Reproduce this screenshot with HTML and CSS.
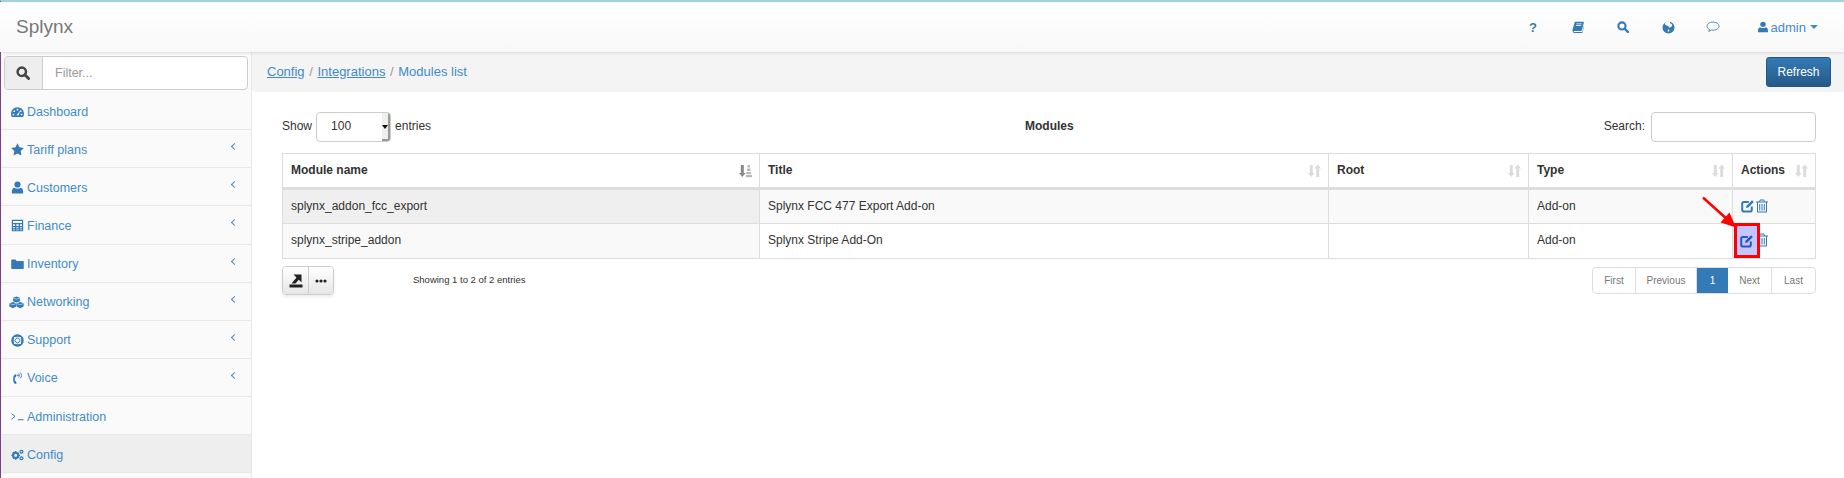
FILE: index.html
```html
<!DOCTYPE html>
<html lang="en">
<head>
  <meta charset="UTF-8">
  <title>Splynx</title>
  <link rel="stylesheet" href="styles.css">
</head>
<body>
  <svg class="defs" width="0" height="0">
    <symbol id="i-search" viewBox="0 0 16 16"><circle cx="6.600" cy="6.600" r="4.800" fill="none" stroke="currentColor" stroke-width="2.800"/><path d="M10 10l4.400 4.400" stroke="currentColor" stroke-width="3.200" stroke-linecap="round"/></symbol>
    <symbol id="i-dash" viewBox="0 0 16 14"><path fill-rule="evenodd" d="M8 1a8 8 0 0 1 8 8c0 1.600-.4 3-1.100 4H1.100C.4 12 0 10.600 0 9a8 8 0 0 1 8-8zM7 3v2h2V3zM3 5v2h2V5zM11 5v2h2V5zM2 9v2h2V9zM12 9v2h2V9zM6.500 11h3l1.500-5.500-2.700 3.700z"/></symbol>
    <symbol id="i-star" viewBox="0 0 16 16"><path d="M8 .3l2.400 5 5.500.8-4 3.800 1 5.500L8 12.800l-4.900 2.600 1-5.500-4-3.800 5.500-.8z"/></symbol>
    <symbol id="i-user" viewBox="0 0 14 16"><circle cx="7" cy="4.300" r="3.800"/><path d="M1 15.500c-.9 0-1-.8-1-1.500 0-3 .8-5.500 3-5.800 1 .8 2.400 1.300 4 1.300s3-.5 4-1.300c2.200.3 3 2.800 3 5.800 0 .7-.1 1.500-1 1.500z"/></symbol>
    <symbol id="i-calc" viewBox="0 0 16 16"><path fill-rule="evenodd" d="M1 1h14v14H1zM2.500 2.500v2.500h11V2.500zM2.500 6.500V8.500h2.500V6.500zM6.500 6.500V8.500h3V6.500zM11 6.500V8.500h2.500V6.500zM2.500 10V11.500h2.500V10zM6.500 10V11.500h3V10zM11 10V11.500h2.500V10zM2.500 13v.7h2.500V13zM6.500 13v.7h3V13zM11 13v.7h2.500V13z"/></symbol>
    <symbol id="i-folder" viewBox="0 0 16 14"><path d="M1.500 1.500h4L7 3.200h7.500c.6 0 1.200.5 1.200 1.200v7.600c0 .7-.6 1.200-1.200 1.200h-13C.8 13.200.3 12.700.3 12V2.700c0-.7.5-1.200 1.200-1.200z"/></symbol>
    <symbol id="i-cubes" viewBox="0 0 18 16"><path d="M9 .5l4.200 1.500v4.400L9 8 4.800 6.400V2zM4.500 7.300l4.300 1.500V13l-4.300 2L.2 13V8.800zM13.500 7.300l4.300 1.500V13l-4.300 2-4.300-2V8.800z"/><path d="M5 2.500l4 1.500 4-1.500M.5 9.300l4 1.500 4-1.500M9.500 9.300l4 1.500 4-1.500" fill="none" stroke="#fafafa" stroke-width=".7"/></symbol>
    <symbol id="i-ring" viewBox="0 0 16 16"><circle cx="8" cy="8" r="6.200" fill="none" stroke="currentColor" stroke-width="3"/><circle cx="8" cy="8" r="3" fill="none" stroke="currentColor" stroke-width="1.200"/><path d="M3.600 3.600l2.300 2.300M12.400 3.600l-2.300 2.300M3.600 12.400l2.300-2.300M12.400 12.400l-2.300-2.300" stroke="#fafafa" stroke-width="1.200"/></symbol>
    <symbol id="i-voice" viewBox="0 0 12 16"><path d="M3.800 2.800L1.800 3.600C.2 6.500.2 10.700 1.800 13.800l2 1 1.200-1-1.200-2.800H3C2.400 9.500 2.400 8 3 6.500h1.100l.8-3z"/><path d="M7.300 1.800c1.400 1.400 1.400 3.400 0 4.800M9.300 .5c2.200 2.200 2.200 5.300 0 7.500" fill="none" stroke="currentColor" stroke-width="1.100"/><circle cx="6.600" cy="4.200" r="1"/></symbol>
    <symbol id="i-term" viewBox="0 0 16 10"><path d="M.7 1.500L5 4.800.7 8.200M8.500 9h7" fill="none" stroke="currentColor" stroke-width="1.200"/></symbol>
    <symbol id="i-cogs" viewBox="0 0 18 16"><circle cx="6.500" cy="8.500" r="3.600" fill="none" stroke="currentColor" stroke-width="3"/><path d="M5.500 2.500h2v2h-2zM5.500 12.500h2v2h-2zM.5 7.500h2v2h-2zM10.500 7.500h2v2h-2zM2 4.700l1.400-1.400 1.400 1.400-1.400 1.400zM8.400 11l1.400-1.400 1.400 1.400-1.400 1.400zM2 12.300l1.400-1.400 1.400 1.400-1.400 1.400zM8.400 6l1.400-1.400L11.200 6 9.800 7.400z"/><circle cx="14.500" cy="3.500" r="2" fill="none" stroke="currentColor" stroke-width="1.700"/><circle cx="14.500" cy="12.500" r="2" fill="none" stroke="currentColor" stroke-width="1.700"/></symbol>
    <symbol id="i-book" viewBox="0 0 14 14"><path fill-rule="evenodd" d="M4 .8h9.300c.5 0 .7.300.6.800l-2.400 9c-.2.700-.6 1-1.300 1H2.600c-.4 0-.8.300-.6.800.1.300.4.400.8.400h8.600c.4 0 .6-.2.700-.5l2-7.800.5.400-2.300 8.300c-.2.600-.6.900-1.200.9H2.500C1.300 13.100.4 12 .5 10.900L3 1.800C3.200 1.200 3.500.8 4 .8zM5.200 3l-.2.800h6.300l.2-.8zM4.600 5l-.2.800h6.300l.2-.8z"/></symbol>
    <symbol id="i-globe" viewBox="0 0 14 14"><path fill-rule="evenodd" d="M7 .5a6.500 6.500 0 1 1 0 13 6.500 6.500 0 0 1 0-13zM3.200 2.200C2.700 3 3.300 3.700 4 4.300c.7.500 1.600.6 2.400 1 1 .5 1.300 1.500 2 2 .5-.2 1.800-1.300 2.500-2.300.3-.5-.1-1.600-.8-2.100-.6-.4-1.300-.1-1.600-.6-.2-.4.2-1 .1-1.300-1.900-.4-4 0-5.400 1.200zM7 8.800c-.7.800-1 2-.7 3 .8-.2 1.500-1 1.700-1.800.1-.6-.5-1-1-1.200z"/></symbol>
    <symbol id="i-comment" viewBox="0 0 16 14"><path d="M8 1.300c3.900 0 7 2 7 4.700s-3.100 4.700-7 4.700c-.7 0-1.300 0-2-.2-.8.800-1.900 1.400-3 1.600.6-.7 1-1.500 1-2.300C2.300 9.100 1 7.700 1 6c0-2.700 3.100-4.700 7-4.700z" fill="none" stroke="currentColor" stroke-width="1"/></symbol>
    <symbol id="i-edit" viewBox="0 0 14 14"><path d="M10.800 7.500v3.200c0 1-.8 1.800-1.800 1.800H3c-1 0-1.800-.8-1.800-1.800v-6c0-1 .8-1.800 1.800-1.800h4.800" fill="none" stroke="currentColor" stroke-width="2"/><path d="M5.500 6.800L11 1.300l1.800 1.800-5.500 5.500-2.300.5z"/></symbol>
    <symbol id="i-trash" viewBox="0 0 12 14"><path fill-rule="evenodd" d="M4 .5h4L9 2.500h3v1h-1v9c0 .6-.4 1-1 1H2c-.6 0-1-.4-1-1v-9H0v-1h3zM4.400 1.500l-.3 1h3.800l-.3-1zM2 3.500v9h8v-9zM3.200 5h1v6.500h-1zM5.500 5h1v6.500h-1zM7.800 5h1v6.500h-1z"/></symbol>
    <symbol id="i-export" viewBox="0 0 14 14"><path d="M.5 10.500h13V13.500H.5zM4.500 .5h8v8l-2.700-2.700-3.300 3.700H2.500l5-6z"/></symbol>
    <symbol id="i-dots" viewBox="0 0 12 4"><circle cx="2" cy="2" r="1.600"/><circle cx="6" cy="2" r="1.600"/><circle cx="10" cy="2" r="1.600"/></symbol>
    <symbol id="i-sort" viewBox="0 0 13 14"><path d="M1.800 1h3v8h1.800L3.300 13 0 9h1.800zM9.700 .5L13 4.500h-1.800V13h-3V4.500H6.400z"/></symbol>
    <symbol id="i-sortasc" viewBox="0 0 13 14"><path d="M1.800 1h3v8h1.800L3.300 13 0 9h1.800z"/><path d="M8.500 1h2.500v2.500H8.500zM8 4.500h3.500v2.500H8zM7.500 8h4.500v2.300H7.500zM7 11h6v2.300H7z" opacity=".6"/></symbol>
  </svg>

  <div class="app">
    <header class="topbar">
      <div class="brand">Splynx</div>
      <nav class="toplinks">
        <a class="toplink help">?</a>
        <a class="toplink"><svg class="ic" width="12" height="12"><use href="#i-book"/></svg></a>
        <a class="toplink"><svg class="ic" width="12" height="12"><use href="#i-search"/></svg></a>
        <a class="toplink"><svg class="ic" width="13" height="13"><use href="#i-globe"/></svg></a>
        <a class="toplink"><svg class="ic" width="14" height="12"><use href="#i-comment"/></svg></a>
        <a class="toplink user"><svg class="ic" width="10" height="12"><use href="#i-user"/></svg>admin<span class="caret"></span></a>
      </nav>
    </header>

    <div class="main">
      <aside class="sidebar">
        <div class="filter">
          <span class="filter-btn"><svg class="ic" width="14" height="14"><use href="#i-search"/></svg></span>
          <input class="filter-input" placeholder="Filter...">
        </div>
        <ul class="menu">
          <li class="menu-item"><svg class="ic menu-ic" height="12"><use href="#i-dash"/></svg>Dashboard</li>
          <li class="menu-item"><svg class="ic menu-ic" height="13"><use href="#i-star"/></svg>Tariff plans<i class="chev"></i></li>
          <li class="menu-item"><svg class="ic menu-ic" height="13"><use href="#i-user"/></svg>Customers<i class="chev"></i></li>
          <li class="menu-item"><svg class="ic menu-ic" height="13"><use href="#i-calc"/></svg>Finance<i class="chev"></i></li>
          <li class="menu-item"><svg class="ic menu-ic" height="12"><use href="#i-folder"/></svg>Inventory<i class="chev"></i></li>
          <li class="menu-item wide-ic"><svg class="ic menu-ic" height="13"><use href="#i-cubes"/></svg>Networking<i class="chev"></i></li>
          <li class="menu-item"><svg class="ic menu-ic" height="13"><use href="#i-ring"/></svg>Support<i class="chev"></i></li>
          <li class="menu-item"><svg class="ic menu-ic" height="13"><use href="#i-voice"/></svg>Voice<i class="chev"></i></li>
          <li class="menu-item"><svg class="ic menu-ic" height="9"><use href="#i-term"/></svg>Administration</li>
          <li class="menu-item active"><svg class="ic menu-ic" height="12"><use href="#i-cogs"/></svg>Config</li>
        </ul>
      </aside>

      <section class="content">
        <div class="crumbs">
          <div class="crumb-path"><a>Config</a> <span>/</span> <a>Integrations</a> <span>/</span> Modules list</div>
          <button class="btn-refresh">Refresh</button>
        </div>

        <div class="panel">
          <div class="table-top">
            <label class="length">Show
              <span class="length-select">100<i></i></span>
              entries</label>
            <div class="table-title">Modules</div>
            <label class="search">Search: <input class="search-input"></label>
          </div>

          <table class="grid">
            <thead>
              <tr>
                <th class="c-name">Module name<svg class="sort on" width="13" height="14"><use href="#i-sortasc"/></svg></th>
                <th class="c-title">Title<svg class="sort" width="13" height="14"><use href="#i-sort"/></svg></th>
                <th class="c-root">Root<svg class="sort" width="13" height="14"><use href="#i-sort"/></svg></th>
                <th class="c-type">Type<svg class="sort" width="13" height="14"><use href="#i-sort"/></svg></th>
                <th class="c-act">Actions<svg class="sort" width="13" height="14"><use href="#i-sort"/></svg></th>
              </tr>
            </thead>
            <tbody>
              <tr class="odd">
                <td class="sorted">splynx_addon_fcc_export</td>
                <td>Splynx FCC 477 Export Add-on</td>
                <td></td>
                <td>Add-on</td>
                <td class="actions"><svg class="ic" width="14" height="14"><use href="#i-edit"/></svg><svg class="ic" width="12" height="14"><use href="#i-trash"/></svg></td>
              </tr>
              <tr>
                <td class="sorted">splynx_stripe_addon</td>
                <td>Splynx Stripe Add-On</td>
                <td></td>
                <td>Add-on</td>
                <td class="actions marked">
                  <svg class="ic" width="14" height="14"><use href="#i-edit"/></svg><svg class="ic" width="12" height="14"><use href="#i-trash"/></svg>
                  <span class="mark"><svg class="ic" width="14" height="14"><use href="#i-edit"/></svg></span>
                  <svg class="arrow" width="40" height="36" viewBox="0 0 40 36"><path d="M2 1.500L27 24" stroke="#f00" stroke-width="2.500"/><path d="M35 31.500L19.500 26.500 28.500 16.500z" fill="#f00"/></svg>
                </td>
              </tr>
            </tbody>
          </table>

          <div class="table-foot">
            <div class="tools">
              <button class="tool"><svg width="14" height="14"><use href="#i-export"/></svg></button>
              <button class="tool"><svg width="12" height="4"><use href="#i-dots"/></svg></button>
            </div>
            <div class="info">Showing 1 to 2 of 2 entries</div>
            <ul class="pager">
              <li>First</li>
              <li>Previous</li>
              <li class="current">1</li>
              <li>Next</li>
              <li>Last</li>
            </ul>
          </div>
        </div>
      </section>
    </div>
  </div>
</body>
</html>
```

FILE: styles.css
```css
*{
  margin: 0px;
  padding: 0px;
  box-sizing: border-box;
}
html, body{
  height: 100%;
  overflow: hidden;
}
body{
  font-family: "Liberation Sans", Arial, sans-serif;
  font-size: 13px;
  color: #333;
  background-color: #fff;
}
ul{
  list-style: none;
}
a{
  color: #428bca;
}
.defs{
  display: block;
  height: 0;
}
.ic{
  fill: currentColor;
  color: #337ab7;
  flex: none;
}
.app{
  height: 100%;
  display: flex;
  flex-direction: column;
  border-left: 1px solid #7b3f8c;
  border-top: 2px solid #a3d3e8;
}
.topbar{
  height: 50px;
  flex: none;
  margin-left: -1px;
  display: flex;
  align-items: center;
  justify-content: space-between;
  background: linear-gradient(#fff, #f8f8f8);
  box-shadow: 0 1px 3px rgba(0,0,0,.12);
  position: relative;
  z-index: 2;
}
.brand{
  margin-left: 16px;
  font-size: 19px;
  color: #777;
}
.toplinks{
  display: flex;
  align-items: center;
  height: 100%;
  padding-right: 26px;
}
.toplink{
  width: 45px;
  display: flex;
  align-items: center;
  justify-content: center;
}
.toplink.help{
  font-weight: bold;
  font-size: 13px;
  color: #337ab7;
}
.toplink.user{
  width: auto;
  margin-left: 22px;
  gap: 3px;
  font-size: 13px;
  color: #428bca;
}
.caret{
  width: 0;
  height: 0;
  border-left: 4px solid transparent;
  border-right: 4px solid transparent;
  border-top: 4px solid #428bca;
  margin-left: 1px;
}
.main{
  flex: 1;
  display: flex;
  min-height: 0;
}
.sidebar{
  width: 251px;
  flex: none;
  background-color: #fafafa;
  border-right: 1px solid #e7e7e7;
}
.filter{
  display: flex;
  height: 34px;
  margin: 4px 3px 2px 3px;
  border: 1px solid #ccc;
  border-radius: 4px;
  background-color: #fff;
  overflow: hidden;
}
.filter-btn{
  width: 38px;
  display: flex;
  align-items: center;
  justify-content: center;
  background-color: #eee;
  border-right: 1px solid #ccc;
}
.filter-btn .ic{
  color: #444;
  margin-left: -1px;
}
.filter-input{
  flex: 1;
  min-width: 0;
  border: 0;
  padding-left: 12px;
  font: 12.5px "Liberation Sans", Arial, sans-serif;
  background: transparent;
}
.filter-input::placeholder{
  color: #999;
}
.menu-item{
  height: 38.125px;
  display: flex;
  align-items: center;
  padding: 2px 0 0 10px;
  border-bottom: 1px solid #e7e7e7;
  color: #428bca;
  font-size: 12.5px;
  position: relative;
}
.menu-ic{
  margin-right: 3px;
  width: 13px;
}
.wide-ic .menu-ic{
  width: 15px;
  margin-left: -2px;
}
.menu-item.active{
  background-color: #eee;
}
.chev{
  position: absolute;
  right: 14px;
  top: 14px;
  width: 5px;
  height: 5px;
  border-left: 1px solid #428bca;
  border-bottom: 1px solid #428bca;
  transform: rotate(45deg);
}
.content{
  flex: 1;
  min-width: 0;
}
.crumbs{
  height: 40px;
  background-color: #f4f4f4;
  border-bottom-left-radius: 4px;
  display: flex;
  align-items: center;
  justify-content: space-between;
  padding: 0 13px 0 15px;
  color: #428bca;
}
.crumb-path{
  padding-bottom: 2px;
}
.crumb-path a{
  text-decoration: underline;
}
.crumb-path span{
  color: #999;
  margin: 0 1px;
}
.btn-refresh{
  width: 65px;
  height: 30px;
  border: 1px solid #245580;
  border-radius: 3px;
  background: linear-gradient(#337ab7, #265a88);
  color: #fff;
  font: 12px "Liberation Sans", Arial, sans-serif;
}
.panel{
  padding: 20px 28px 0 30px;
}
.table-top{
  display: flex;
  align-items: center;
  height: 30px;
  margin-bottom: 11px;
  font-size: 12px;
}
.length{
  width: 506px;
  height: 30px;
  padding-bottom: 2px;
  display: flex;
  align-items: center;
  gap: 4px;
}
.length-select{
  width: 75px;
  height: 30px;
  margin-bottom: -2px;
  border: 1px solid #ccc;
  border-radius: 4px;
  padding: 0 14px 2px;
  display: flex;
  align-items: center;
  background-color: #fff;
  position: relative;
  overflow: hidden;
  font-size: 12px;
}
.length-select i{
  position: absolute;
  right: 0;
  top: 0;
  bottom: 0;
  width: 8px;
  background-color: #efefef;
  border-right: 2px solid #999;
  border-bottom: 2px solid #999;
}
.length-select i::after{
  content: "";
  position: absolute;
  left: 0;
  top: 12px;
  border-left: 3px solid transparent;
  border-right: 3px solid transparent;
  border-top: 4px solid #111;
}
.table-title{
  flex: 1;
  padding: 0 0 2px 237px;
  font-weight: bold;
  font-size: 12px;
}
.search{
  height: 30px;
  padding-bottom: 2px;
  display: flex;
  align-items: center;
  gap: 6px;
}
.search-input{
  width: 165px;
  height: 30px;
  margin-bottom: -2px;
  border: 1px solid #ccc;
  border-radius: 4px;
}
.grid{
  width: 1534px;
  border-collapse: separate;
  border-spacing: 0;
  table-layout: fixed;
  border-top: 1px solid #ddd;
  border-left: 1px solid #ddd;
  font-size: 12px;
}
.grid th, .grid td{
  border-right: 1px solid #ddd;
  border-bottom: 1px solid #ddd;
  padding: 0 8px 2px;
  text-align: left;
  position: relative;
}
.grid th{
  height: 36px;
  border-bottom-width: 3px;
  font-weight: bold;
  color: #333;
}
.grid td{
  height: 34px;
}
.grid tbody tr:last-child td{
  height: 35px;
}
.c-name{ width: 477px; }
.c-title{ width: 569px; }
.c-root{ width: 200px; }
.c-type{ width: 204px; }
.odd td{
  background-color: #f9f9f9;
}
.grid td.sorted{
  background-color: #f9f9f9;
}
.odd td.sorted{
  background-color: #efefef;
}
.sort{
  position: absolute;
  right: 7px;
  top: 10px;
  fill: #dcdcdc;
}
.sort.on{
  fill: #8a8a8a;
}
.actions{
  white-space: nowrap;
}
.actions .ic{
  vertical-align: middle;
  margin-right: 1px;
}
.mark{
  position: absolute;
  left: 1px;
  top: -1px;
  width: 26px;
  height: 35px;
  border: 3px solid #f00;
  background-color: #c5c5ff;
  display: flex;
  align-items: center;
  padding-left: 3px;
}
.mark .ic{
  color: #2a55c4;
}
.arrow{
  position: absolute;
  left: -32px;
  top: -28px;
}
.table-foot{
  display: flex;
  align-items: flex-start;
  height: 37px;
  margin-top: 7px;
  position: relative;
}
.tools{
  display: flex;
  height: 29px;
  border: 1px solid #ccc;
  border-radius: 4px;
  box-shadow: 0 2px 3px rgba(0,0,0,.08);
  overflow: hidden;
}
.tool{
  width: 25px;
  border: 0;
  background: linear-gradient(#fff, #e6e6e6);
  display: flex;
  align-items: center;
  justify-content: center;
  fill: #222;
}
.tool + .tool{
  border-left: 1px solid #ccc;
}
.info{
  margin: 8px 0 0 79px;
  font-size: 9.5px;
  color: #333;
}
.pager{
  margin: 1px 0 0 auto;
  display: flex;
  height: 27px;
  border: 1px solid #ddd;
  border-radius: 4px;
  overflow: hidden;
  font-size: 10px;
  color: #777;
}
.pager li{
  display: flex;
  align-items: center;
  justify-content: center;
  width: 43px;
  border-right: 1px solid #ddd;
}
.pager li:nth-child(2){
  width: 61px;
}
.pager li:nth-child(4){
  width: 44px;
}
.pager li:last-child{
  width: 43px;
  border-right: 0;
}
.pager li.current{
  width: 31px;
  background-color: #337ab7;
  border-right: 0;
  color: #fff;
}
```
